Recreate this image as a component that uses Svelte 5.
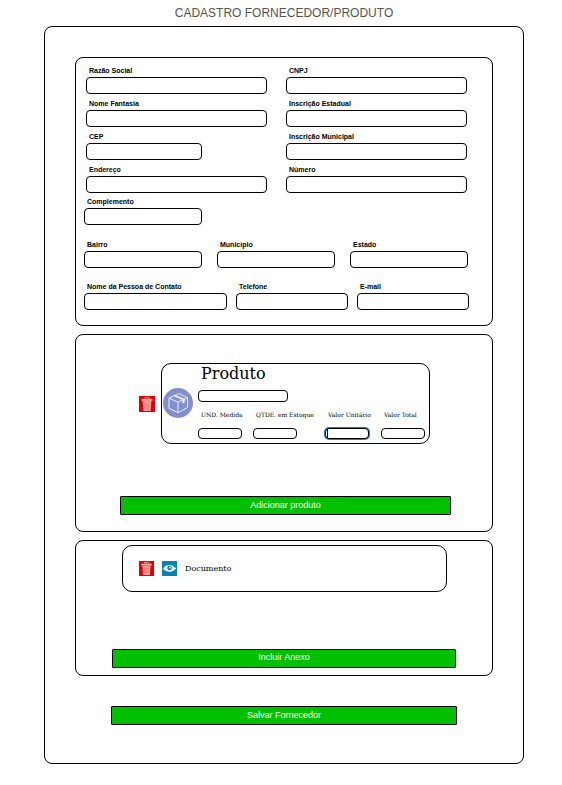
<script>
  const main = [
    { id: 'razao', label: 'Razão Social' },
    { id: 'cnpj', label: 'CNPJ' },
    { id: 'fantasia', label: 'Nome Fantasia' },
    { id: 'estadual', label: 'Inscrição Estadual' },
    { id: 'cep', label: 'CEP', short: true },
    { id: 'municipal', label: 'Inscrição Municipal' },
    { id: 'endereco', label: 'Endereço' },
    { id: 'numero', label: 'Número' }
  ];
  const place = [
    { id: 'complemento', label: 'Complemento' },
    { id: 'bairro', label: 'Bairro', newRow: true },
    { id: 'municipio', label: 'Município' },
    { id: 'estado', label: 'Estado' }
  ];
  const contact = [
    { id: 'contato', label: 'Nome da Pessoa de Contato' },
    { id: 'telefone', label: 'Telefone' },
    { id: 'email', label: 'E-mail' }
  ];
  const amounts = [
    { id: 'unidade', label: 'UND. Medida' },
    { id: 'estoque', label: 'QTDE. em Estoque' },
    { id: 'unitario', label: 'Valor Unitário', active: true },
    { id: 'total', label: 'Valor Total' }
  ];
</script>

{#snippet field(f)}
  <div class="field" class:short={f.short} class:new-row={f.newRow}>
    <label for={f.id}>{f.label}</label>
    <input id={f.id} type="text" />
  </div>
{/snippet}

{#snippet trash()}
  <svg viewBox="0 0 16 16" aria-hidden="true">
    <rect width="16" height="16" fill="#e00000" />
    <path d="M6 2.5v-1h4v1" fill="none" stroke="#f4a6a6" stroke-width="1" />
    <path d="M2.5 2.8h11v2h-11z" fill="#f6b4b4" />
    <path d="M3.6 5h8.8l-.8 10h-7.2z" fill="#f4a0a0" />
    <path d="M5.9 6.2l.3 7.4M8 6.2v7.4M10.1 6.2l-.3 7.4" stroke="#ea6464" stroke-width=".7" />
  </svg>
{/snippet}

<h1>CADASTRO FORNECEDOR/PRODUTO</h1>
<form class="sheet" onsubmit={(e) => e.preventDefault()}>
  <section class="panel data">
    <div class="grid pair">
      {#each main as f}{@render field(f)}{/each}
    </div>
    <div class="grid triple">
      {#each place as f}{@render field(f)}{/each}
    </div>
    <div class="grid contact">
      {#each contact as f}{@render field(f)}{/each}
    </div>
  </section>

  <section class="panel products">
    <div class="line">
      <button type="button" class="icon" aria-label="Excluir produto">{@render trash()}</button>
      <div class="card product">
        <svg class="box" viewBox="0 0 30 30" aria-hidden="true">
          <circle cx="15" cy="15" r="15" fill="#8190cd" />
          <g fill="none" stroke="#e9ecf8" stroke-width="1" stroke-linejoin="round">
            <path d="M6 10.2L15.5 5.5L24.5 9.5V19.5L15 24.8L6 20.2Z" />
            <path d="M6 10.2L15 14.2L24.5 9.5M15 14.2V24.8" />
          </g>
          <path d="M10.3 8.1l2.3-1.1 9.2 4v3.6l-2.4 1.2v-3.7z" fill="#e9ecf8" />
        </svg>
        <div class="details">
          <label class="name" for="produto">Produto</label>
          <input id="produto" type="text" />
          <div class="amounts">
            {#each amounts as a}
              <div class="amount">
                <label for={a.id}>{a.label}</label>
                <input id={a.id} type="text" class:active={a.active} />
              </div>
            {/each}
          </div>
        </div>
      </div>
    </div>
    <button type="button" class="action">Adicionar produto</button>
  </section>

  <section class="panel files">
    <div class="card file">
      <button type="button" class="icon" aria-label="Excluir documento">{@render trash()}</button>
      <button type="button" class="icon" aria-label="Ver documento">
        <svg viewBox="0 0 16 16" aria-hidden="true">
          <rect width="16" height="16" fill="#0683b3" />
          <path d="M1 8Q4 4.3 8 4.3T15 8Q12 11.5 8 11.5T1 8Z" fill="#f2fafd" />
          <circle cx="8" cy="7.5" r="2.4" fill="#0683b3" />
          <circle cx="8.4" cy="7" r="1" fill="#f2fafd" />
        </svg>
      </button>
      <span>Documento</span>
    </div>
    <button type="button" class="action">Incluir Anexo</button>
  </section>

  <button type="submit" class="action save">Salvar Fornecedor</button>
</form>

<style>
  :global(body) {
    background: #fff;
  }
  h1, .sheet, .sheet * {
    box-sizing: border-box;
  }
  h1 {
    margin: 0 38px 0 44px;
    font: 400 12px/26px "Liberation Sans", Arial, sans-serif;
    text-align: center;
    color: #555;
  }
  .sheet {
    margin: 0 38px 21px 44px;
    padding: 30px 30px 38px;
    border: 1px solid #000;
    border-radius: 8px;
    display: flex;
    flex-direction: column;
    gap: 8px;
    font-family: "Liberation Sans", Arial, sans-serif;
  }
  .panel {
    border: 1px solid #000;
    border-radius: 8px;
    display: flex;
    flex-direction: column;
  }
  .data {
    padding: 9px 0 15px;
  }
  .grid {
    display: grid;
  }
  .pair {
    grid-template-columns: 1fr 1fr;
    gap: 6px 19px;
    padding: 0 25px 0 10px;
  }
  .triple {
    grid-template-columns: 1fr 1fr 1fr;
    gap: 16px 15px;
    padding: 0 24px 0 8px;
    margin-top: 5px;
  }
  .contact {
    grid-template-columns: 143fr 112fr 112fr;
    gap: 9px;
    padding: 0 23px 0 8px;
    margin-top: 15px;
  }
  .field {
    display: flex;
    flex-direction: column;
    gap: 2px;
    min-width: 0;
  }
  .short {
    width: 64%;
  }
  .new-row {
    grid-column: 1;
  }
  label {
    padding-left: 3px;
    white-space: nowrap;
  }
  .field label {
    font-weight: 700;
    font-size: 7px;
    line-height: 8px;
  }
  input {
    display: block;
    width: 100%;
    height: 17px;
    margin: 0;
    padding: 0 4px;
    border: 1px solid #000;
    border-radius: 4px;
    background: #fff;
    font: 8px "Liberation Sans", Arial, sans-serif;
    outline: none;
  }
  .products {
    padding: 28px 0 16px;
    gap: 52px;
  }
  .line {
    display: flex;
    align-items: center;
    gap: 6px;
    padding: 0 62px 0 63px;
  }
  .icon {
    flex: none;
    width: 16px;
    height: 16px;
    padding: 0;
    border: 0;
    background: none;
  }
  .icon svg {
    display: block;
    width: 100%;
    height: 100%;
  }
  .card {
    border: 1px solid #000;
    border-radius: 10px;
    display: flex;
    align-items: center;
    font-family: "DejaVu Serif", serif;
  }
  .product {
    flex: 1;
    gap: 5px;
    padding: 0 4px 4px 1px;
  }
  .box {
    flex: none;
    width: 30px;
    height: 30px;
    margin-top: 2px;
  }
  .details {
    flex: 1;
  }
  .name {
    display: block;
    font-size: 16px;
    line-height: 20px;
    margin-bottom: 6px;
  }
  .details input {
    height: 12px;
  }
  .details #produto {
    width: 90px;
  }
  .amounts {
    display: grid;
    grid-template-columns: 55fr 72fr 56fr 44fr;
    margin-top: 8px;
  }
  .amount {
    display: flex;
    flex-direction: column;
    gap: 8px;
    min-width: 0;
  }
  .amount label {
    font-size: 6px;
    line-height: 10px;
  }
  .amount input {
    width: 44px;
    height: 11px;
  }
  .amount .active {
    box-shadow: 0 0 0 1px #1583c8;
    background: linear-gradient(#000, #000) 1px 0 / 1px 100% no-repeat #fff;
  }
  .action {
    height: 19px;
    margin: 0 41px 0 44px;
    padding: 0 0 1px;
    border: 1px solid #000;
    border-radius: 1px;
    background: #00c000;
    color: #fff;
    font: 9px "Liberation Sans", Arial, sans-serif;
  }
  .files {
    padding: 4px 0 7px;
    gap: 57px;
  }
  .file {
    height: 47px;
    margin: 0 45px 0 46px;
    padding: 0 16px;
    gap: 8px;
    font-size: 8px;
  }
  .file .icon {
    width: 15px;
    height: 15px;
  }
  .files .action {
    margin: 0 36px;
    padding-bottom: 3px;
  }
  .save {
    margin: 22px 36px 0;
  }
</style>
